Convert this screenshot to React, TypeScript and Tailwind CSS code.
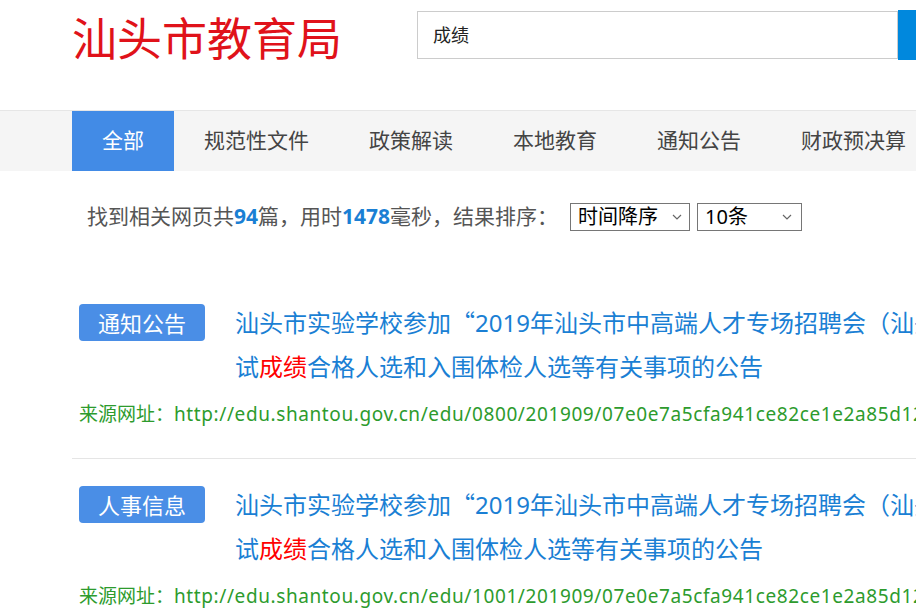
import React from "react";

const Chevron = () => (
  <svg width="12" height="8" viewBox="0 0 12 8" className="shrink-0">
    <path d="M2 2 L6 6 L10 2" fill="none" stroke="#666" strokeWidth="1.2" />
  </svg>
);

const CJK = { fontFamily: '"Noto Sans CJK SC", sans-serif' };

const Item = ({ tag, path, first }: { tag: string; path: string; first?: boolean }) => (
  <div className={`flex flex-col ${first ? "pt-[67px]" : "pt-[23px] border-t border-[#e5e5e5]"} pb-[29px] pl-[7px]`}>
    <div className="flex items-start">
      <div
        className="mt-[4px] w-[126px] h-[37px] shrink-0 rounded-[4px] bg-[#4a8ee6] text-white text-[22px] leading-[37px] text-center"
        style={CJK}
      >
        {tag}
      </div>
      <div className="ml-[30px] text-[24px] leading-[44px] text-[#1a7fd4] whitespace-nowrap">
        <div>
          汕头市实验学校参加<span style={CJK}>“</span>2019年汕头市中高端人才专场招聘会（汕头市实验学校专场）面
        </div>
        <div>
          试<span className="text-[#ff0000]">成绩</span>合格人选和入围体检人选等有关事项的公告
        </div>
      </div>
    </div>
    <div className="mt-[10px] text-[19px] leading-[30px] text-[#2d9b2d] whitespace-nowrap">
      来源网址：<span className="tracking-[0.6px]">{path}</span>
    </div>
  </div>
);

export default function App() {
  return (
    <div
      className="w-[916px] h-[614px] overflow-hidden bg-white"
      style={{ fontFamily: '"Noto Sans", "Noto Sans CJK SC", sans-serif' }}
    >
      <div className="w-[1400px]">
        {/* header */}
        <div className="h-[110px] pl-[72px] flex items-start">
          <div className="w-[266px] mt-[10px] text-[45px] leading-[58px] text-[#e0121a] whitespace-nowrap">汕头市教育局</div>
          <div className="ml-[79px] mt-[11px] flex">
            <div className="w-[481px] h-[48px] border border-[#cccccc] flex items-center pl-[15px] text-[18px] text-[#222]">
              成绩
            </div>
            <div className="w-[120px] h-[50px] -mt-[1px] bg-[#0088dd] text-white text-[18px] flex items-center justify-center">
              搜索
            </div>
          </div>
        </div>
        {/* nav */}
        <div className="border-t border-[#e6e6e6] bg-[#f5f5f5] h-[61px] pl-[72px] flex text-[21px] text-[#444]">
          <div className="px-[30px] h-full flex items-center bg-[#428be6] text-white">全部</div>
          {["规范性文件", "政策解读", "本地教育", "通知公告", "财政预决算", "人事信息"].map((t) => (
            <div key={t} className="px-[30px] h-full flex items-center whitespace-nowrap">
              {t}
            </div>
          ))}
        </div>
        {/* body */}
        <div className="pl-[72px] w-[1300px]">
          <div className="pt-[30px] pl-[15px] flex items-center text-[21px] text-[#555] h-[62px]">
            <span className="whitespace-nowrap">
              找到相关网页共<b className="text-[#1a7fd4]">94</b>篇，用时<b className="text-[#1a7fd4]">1478</b>毫秒，结果排序：
            </span>
            <div className="ml-[12px] w-[120px] h-[28px] border border-[#767676] flex items-center justify-between pl-[7px] pr-[6px] text-[20px] text-black">
              <span className="leading-none">时间降序</span>
              <Chevron />
            </div>
            <div className="ml-[7px] w-[105px] h-[28px] border border-[#767676] flex items-center justify-between pl-[7px] pr-[8px] text-[20px] text-black">
              <span className="leading-none">10条</span>
              <Chevron />
            </div>
          </div>
          <div>
            <Item first tag="通知公告" path="http://edu.shantou.gov.cn/edu/0800/201909/07e0e7a5cfa941ce82ce1e2a85d12c3a.shtml" />
            <Item tag="人事信息" path="http://edu.shantou.gov.cn/edu/1001/201909/07e0e7a5cfa941ce82ce1e2a85d12c3a.shtml" />
          </div>
        </div>
      </div>
    </div>
  );
}
